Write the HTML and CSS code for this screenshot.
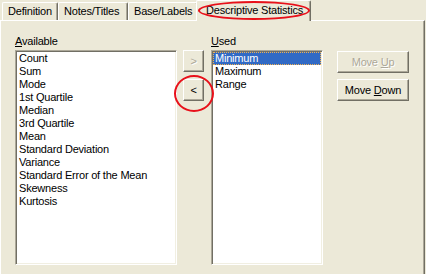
FILE: index.html
```html
<!DOCTYPE html>
<html>
<head>
  <meta charset="UTF-8">
  <title>Descriptive Statistics</title>
  <link rel="stylesheet" href="styles.css">
</head>
<body>
  <div class="dialog">
    <div class="tabs">
      <div class="tab tab-def">Definition</div>
      <div class="tab tab-notes">Notes/Titles</div>
      <div class="tab tab-base">Base/Labels</div>
      <div class="tab tab-stats active">Descriptive Statistics</div>
    </div>

    <div class="panel">
      <div class="col col-avail">
        <div class="caption"><u>A</u>vailable</div>
        <div class="listbox">
          <div class="item">Count</div>
          <div class="item">Sum</div>
          <div class="item">Mode</div>
          <div class="item">1st Quartile</div>
          <div class="item">Median</div>
          <div class="item">3rd Quartile</div>
          <div class="item">Mean</div>
          <div class="item">Standard Deviation</div>
          <div class="item">Variance</div>
          <div class="item">Standard Error of the Mean</div>
          <div class="item">Skewness</div>
          <div class="item">Kurtosis</div>
        </div>
      </div>

      <div class="arrows">
        <button class="btn btn-arrow" disabled>&gt;</button>
        <button class="btn btn-arrow">&lt;</button>
      </div>

      <div class="col col-used">
        <div class="caption"><u>U</u>sed</div>
        <div class="listbox">
          <div class="item selected">Minimum</div>
          <div class="item">Maximum</div>
          <div class="item">Range</div>
        </div>
      </div>

      <div class="moves">
        <button class="btn btn-move" disabled>Move <u>U</u>p</button>
        <button class="btn btn-move">Move <u>D</u>own</button>
      </div>
    </div>
  </div>

  <!-- red annotation marks -->
  <div class="mark mark-tab"></div>
  <div class="mark mark-btn"></div>
</body>
</html>
```

FILE: styles.css
```css
html, body { margin: 0; padding: 0; }
body { position: relative; width: 426px; height: 274px; overflow: hidden; background: #ece9d8; font-family: "Liberation Sans", Arial, sans-serif; font-size: 11px; letter-spacing: -0.2px; color: #000; }

.dialog { display: flex; flex-direction: column; width: 425px; }

.tabs { display: flex; align-items: flex-end; height: 20px; padding-left: 2px; }
.tab { box-sizing: border-box; height: 18px; line-height: 16px; padding-left: 5px; background: #ece9d8; border-top: 1px solid #fff; border-left: 1px solid #fff; border-right: 1px solid #716f64; box-shadow: inset -1px 0 #aca899; border-radius: 2px 2px 0 0; white-space: nowrap; }
.tab-def { width: 56px; }
.tab-notes { width: 70px; }
.tab-base { width: 70px; }
.tab-stats { width: 115px; }
.tab.active { position: relative; z-index: 1; height: 21px; margin: 0 0 -1px -2px; padding-left: 9px; line-height: 18px; }

.panel { display: flex; align-items: flex-start; height: 254px; padding: 13px 0 0 15px; box-sizing: border-box; border-top: 1px solid #fff; border-left: 1px solid #fff; border-right: 1px solid #716f64; box-shadow: inset -1px 0 #aca899; }

.caption { height: 14px; line-height: 14px; margin-bottom: 2px; }
.listbox { box-sizing: border-box; height: 215px; padding: 1px 0; background: #fff; border: 1px solid; border-color: #aca899 #fff #fff #aca899; box-shadow: inset 1px 1px #716f64, inset -1px -1px #f1efe2; }
.col-avail { width: 162px; margin-left: -1px; }
.col-used { width: 112px; margin-left: 7px; }
.item { height: 13px; line-height: 13px; padding: 0 3px; white-space: nowrap; }
.item.selected { margin: 0 1px 0 1px; padding: 0 2px; background: #316ac5; color: #fff; outline: 1px dotted #f0b050; outline-offset: -1px; }

.arrows { display: flex; flex-direction: column; gap: 7px; margin: 16px 0 0 6px; }
.moves { display: flex; flex-direction: column; gap: 6px; margin: 17px 0 0 14px; }

.btn { box-sizing: border-box; padding: 0; background: #ece9d8; font: inherit; letter-spacing: inherit; color: #000; border: 1px solid; border-color: #fff #716f64 #716f64 #fff; box-shadow: inset -1px -1px #aca899; }
.btn:disabled { color: #aca899; text-shadow: 1px 1px #fff; }
.btn-arrow { width: 21px; height: 22px; }
.btn-move { width: 72px; height: 22px; }

.mark { position: absolute; z-index: 2; box-sizing: border-box; border: 2px solid #e8101a; border-radius: 50%; }
.mark-tab { left: 198px; top: 1px; width: 112px; height: 19px; }
.mark-btn { left: 174px; top: 75px; width: 40px; height: 37px; }
```
